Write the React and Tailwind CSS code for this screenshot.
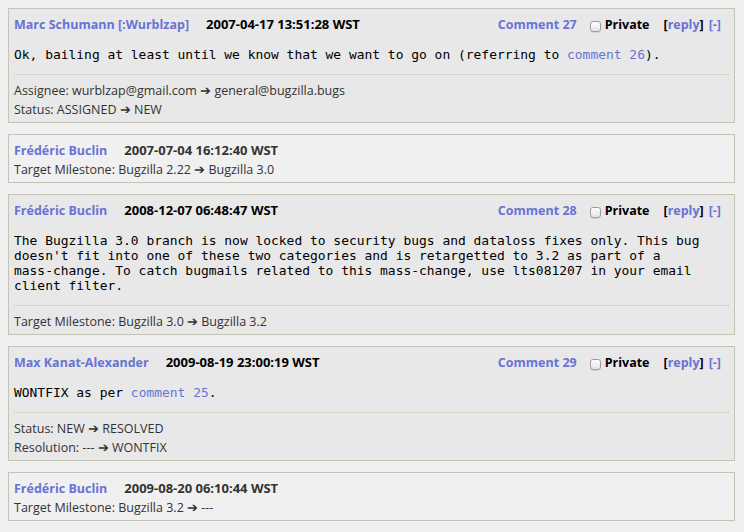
import React from 'react'

const LINK = 'text-[#6873d6]'

const comments = [
  {
    id: 27,
    author: 'Marc Schumann [:Wurblzap]',
    time: '2007-04-17 13:51:28 WST',
    body: (
      <>
        Ok, bailing at least until we know that we want to go on (referring to{' '}
        <span className={LINK}>comment 26</span>).
      </>
    ),
    activity: ['Assignee: wurblzap@gmail.com ➔ general@bugzilla.bugs', 'Status: ASSIGNED ➔ NEW'],
  },
  {
    author: 'Frédéric Buclin',
    time: '2007-07-04 16:12:40 WST',
    activity: ['Target Milestone: Bugzilla 2.22 ➔ Bugzilla 3.0'],
  },
  {
    id: 28,
    author: 'Frédéric Buclin',
    time: '2008-12-07 06:48:47 WST',
    body: (
      <>
        The Bugzilla 3.0 branch is now locked to security bugs and dataloss fixes only. This bug
        {'\n'}doesn't fit into one of these two categories and is retargetted to 3.2 as part of a
        {'\n'}mass-change. To catch bugmails related to this mass-change, use lts081207 in your email
        {'\n'}client filter.
      </>
    ),
    activity: ['Target Milestone: Bugzilla 3.0 ➔ Bugzilla 3.2'],
  },
  {
    id: 29,
    author: 'Max Kanat-Alexander',
    time: '2009-08-19 23:00:19 WST',
    body: (
      <>
        WONTFIX as per <span className={LINK}>comment 25</span>.
      </>
    ),
    activity: ['Status: NEW ➔ RESOLVED', 'Resolution: --- ➔ WONTFIX'],
  },
  {
    author: 'Frédéric Buclin',
    time: '2009-08-20 06:10:44 WST',
    activity: ['Target Milestone: Bugzilla 3.2 ➔ ---'],
  },
]

function Checkbox() {
  return (
    <span className="mt-[3px] inline-block h-[11px] w-[11px] rounded-[3px] border border-[#9c9c9c] bg-gradient-to-b from-white to-[#e4e4e4] shadow-[0_1px_0_rgba(0,0,0,0.08)]" />
  )
}

function CommentBox({ c }) {
  const full = c.id != null
  return (
    <div
      className={
        'border border-[#c4c4b4] pb-[3px] pl-[5px] pr-[5px] pt-[5px] ' +
        (full ? 'bg-[#e8e8e8]' : 'bg-[#f0f0f0]')
      }
    >
      <div className="flex items-center pr-[8px] pt-px text-[12.5px] font-bold leading-[19px]">
        <span className={LINK}>{c.author}</span>
        <span className={'ml-[17px] text-[13px] ' + (full ? 'text-black' : 'text-[#333]')}>{c.time}</span>
        {full && (
          <div className="ml-auto flex items-center">
            <span className={LINK}>Comment {c.id}</span>
            <span className="ml-[13px] flex items-center">
              <Checkbox />
            </span>
            <span className="ml-[4px] text-black">Private</span>
            <span className="ml-[14px] text-black">
              [<span className={LINK}>reply</span>]
            </span>
            <span className={'ml-[5px] ' + LINK}>[-]</span>
          </div>
        )}
      </div>
      {full && (
        <>
          <pre className="mb-[12px] mt-[13px] whitespace-pre font-['DejaVu_Sans_Mono',monospace] text-[12.95px] leading-[15px] text-black">
            {c.body}
          </pre>
          <div className="border-t border-dotted border-[#c4c4b4]" />
        </>
      )}
      <div className={'text-[12.5px] leading-[19px] text-[#333] ' + (full ? 'pt-[6px]' : '')}>
        {c.activity.map((a) => (
          <div key={a}>{a}</div>
        ))}
      </div>
    </div>
  )
}

export default function App() {
  return (
    <div className="min-h-[532px] bg-[#f0f0f0] pb-[11px] pl-2 pr-[9px] pt-2 font-['Open_Sans',sans-serif]">
      <div className="flex flex-col gap-[11px]">
        {comments.map((c, i) => (
          <CommentBox key={i} c={c} />
        ))}
      </div>
    </div>
  )
}
